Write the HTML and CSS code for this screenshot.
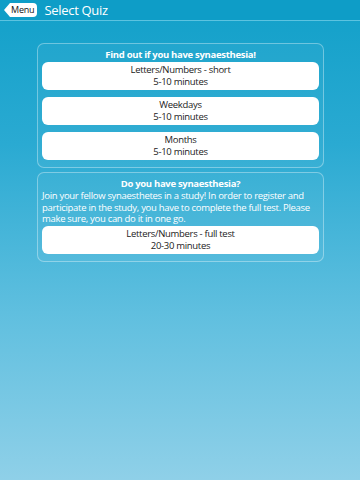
FILE: index.html
```html
<!DOCTYPE html>
<html lang="en">

<head>
  <meta charset="UTF-8">
  <meta name="viewport" content="width=device-width, initial-scale=1.0">
  <title>Select Quiz</title>
  <link rel="stylesheet" href="styles.css">
</head>

<body>
  <div class="header">
    <a class="back-button" href="#">Menu</a>
    <h1 class="title">Select Quiz</h1>
  </div>

  <div class="content">
    <div class="quiz-group">
      <h2 class="group-title">Find out if you have synaesthesia!</h2>
      <a class="quiz-button" href="#">Letters/Numbers - short<br>5-10 minutes</a>
      <a class="quiz-button" href="#">Weekdays<br>5-10 minutes</a>
      <a class="quiz-button" href="#">Months<br>5-10 minutes</a>
    </div>

    <div class="quiz-group">
      <h2 class="group-title">Do you have synaesthesia?</h2>
      <p class="group-text">Join your fellow synaesthetes in a study! In order to register and participate in the study, you have to complete the full test. Please make sure, you can do it in one go.</p>
      <a class="quiz-button" href="#">Letters/Numbers - full test<br>20-30 minutes</a>
    </div>
  </div>
</body>

</html>
```

FILE: styles.css
```css
html,
body {
  height: 100%;
}

body {
  margin: 0;
  font-family: 'Open Sans', 'Noto Sans', sans-serif;
  color: #fff;
  background: linear-gradient(to bottom, #12a0c9 0%, #2aaad2 30%, #5fbfdf 65%, #8fd0e8 100%);
}

.header {
  display: flex;
  align-items: center;
  height: 20px;
  padding-left: 4px;
  background-color: #0e9dc7;
  border-bottom: 1px solid #5cc3e0;
}

.back-button {
  position: relative;
  display: block;
  height: 14px;
  line-height: 14px;
  padding: 0 3px 0 1px;
  margin-left: 6px;
  background-color: #fff;
  border-radius: 0 4px 4px 0;
  color: #111;
  font-size: 9px;
  letter-spacing: -0.2px;
  text-decoration: none;
}

.back-button:before {
  position: absolute;
  content: "";
  left: -6px;
  top: 0;
  width: 0;
  height: 0;
  border-top: 7px solid transparent;
  border-bottom: 7px solid transparent;
  border-right: 6px solid #fff;
}

.title {
  margin: 0 0 0 7px;
  font-size: 13px;
  font-weight: 400;
  letter-spacing: -0.3px;
}

.content {
  padding: 22px 36px 0 37px;
}

.quiz-group {
  margin-bottom: 4px;
  padding: 5px 4px 7px;
  border: 1px solid rgba(255, 255, 255, 0.35);
  border-radius: 7px;
  background-color: rgba(255, 255, 255, 0.04);
}

.group-title {
  margin: 0;
  font-size: 9.5px;
  line-height: 12px;
  font-weight: 700;
  text-align: center;
  letter-spacing: -0.3px;
}

.group-text {
  margin: 0;
  font-size: 9.5px;
  line-height: 11.5px;
  letter-spacing: -0.3px;
}

.quiz-button {
  display: block;
  margin-top: 7px;
  padding: 2px 0;
  background-color: #fff;
  border-radius: 6px;
  color: #222;
  font-size: 9.5px;
  line-height: 12px;
  text-align: center;
  text-decoration: none;
  letter-spacing: -0.3px;
}

.group-title + .quiz-button,
.group-text + .quiz-button {
  margin-top: 1px;
}
```
